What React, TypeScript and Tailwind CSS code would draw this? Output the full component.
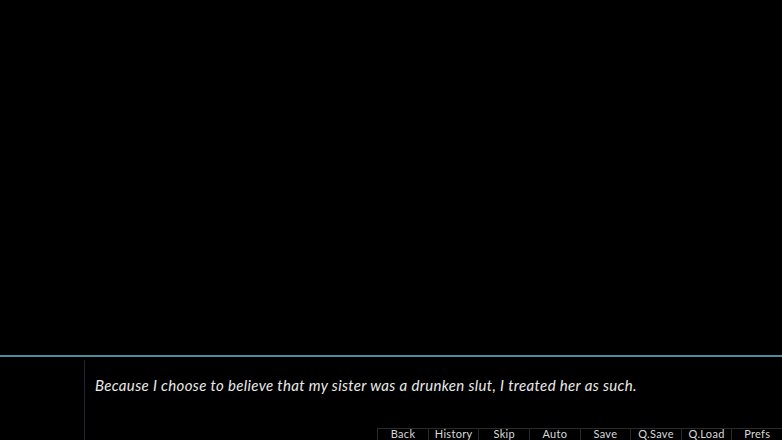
import React from 'react'

const buttons = ['Back', 'History', 'Skip', 'Auto', 'Save', 'Q.Save', 'Q.Load', 'Prefs']

export default function App() {
  return (
    <div className="w-[782px] h-[440px] bg-black flex flex-col overflow-hidden font-['Lato',sans-serif]">
      {/* scene */}
      <div className="h-[355px] shrink-0" />
      <div className="h-[2px] bg-[#4d8c9c] shrink-0" />

      {/* textbox */}
      <div className="flex flex-1 min-h-0">
        <div className="w-[84px] shrink-0" />
        <div className="flex-1 flex flex-col border-l border-[#1e2530] mt-[3px]">
          <p className="pl-[10px] pt-[16px] text-[15px] leading-[18px] italic text-[#ebebeb] tracking-[0.35px]">
            Because I choose to believe that my sister was a drunken slut, I treated her as such.
          </p>
          <div className="mt-auto flex justify-end">
            {buttons.map((b) => (
              <div
                key={b}
                className="w-[50.6px] h-[12px] border-l border-t border-[#2a2a2a] flex items-start justify-center text-[11px] text-[#d8d8d8] leading-[10px] tracking-[0.3px]"
              >
                {b}
              </div>
            ))}
          </div>
        </div>
      </div>
    </div>
  )
}
